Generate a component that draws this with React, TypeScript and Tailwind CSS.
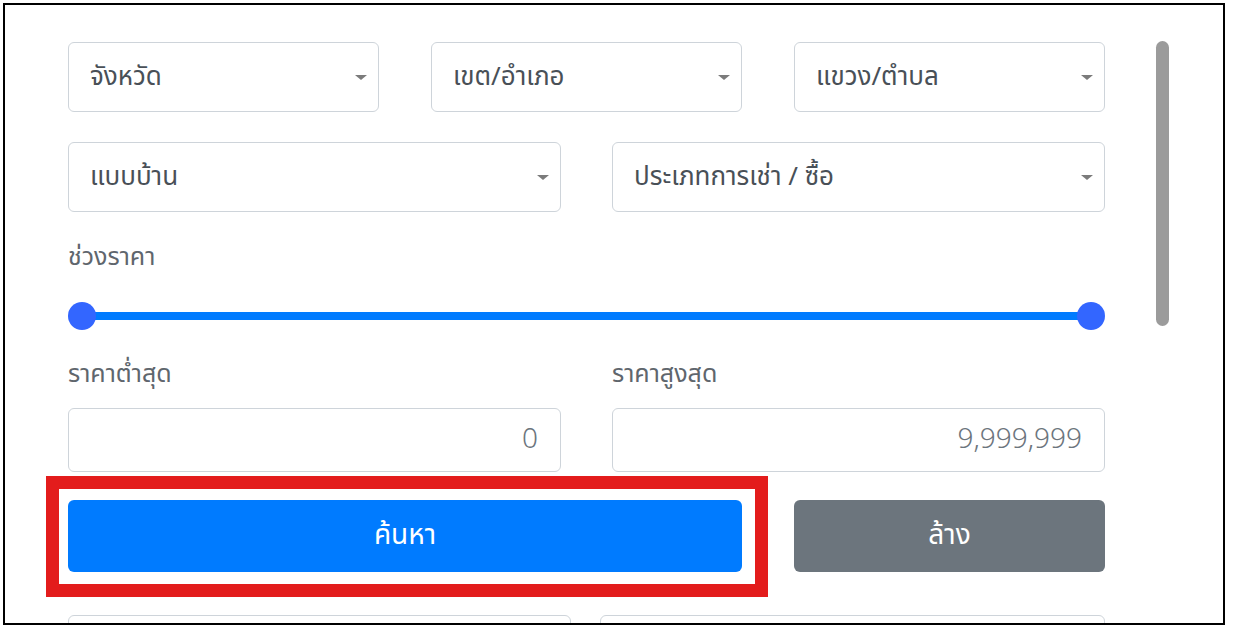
import React from "react";

const font = {
  fontFamily:
    '"Noto Sans Thai", "Noto Sans Thai UI", "Leelawadee UI", Tahoma, "Noto Sans", "DejaVu Sans", sans-serif',
};

function Select({ label }: { label: string }) {
  return (
    <div className="h-[70px] rounded-[6px] border border-[#ced4da] bg-white flex items-center justify-between pl-[21px] pr-[11px]">
      <span className="text-[26px] text-[#495057] leading-none">{label}</span>
      <span className="w-0 h-0 border-l-[6px] border-r-[6px] border-t-[5px] border-l-transparent border-r-transparent border-t-[#7b7b7b]" />
    </div>
  );
}

function NumInput({ value }: { value: string }) {
  return (
    <div className="h-[64px] rounded-[6px] border border-[#ced4da] bg-white flex items-center justify-end pr-[22px]">
      <span className="text-[28px] font-light text-[#6c757d] leading-none">{value}</span>
    </div>
  );
}

export default function App() {
  return (
    <div className="relative w-[1233px] h-[631px] bg-white overflow-hidden" style={font}>
      <div className="ml-[3px] mt-[3px] w-[1222px] h-[622px] border-2 border-black overflow-hidden">
        <div className="pl-[63px] pt-[37px] w-[1100px]">
          <div className="grid grid-cols-3 gap-x-[52px]">
            <Select label="จังหวัด" />
            <Select label="เขต/อำเภอ" />
            <Select label="แขวง/ตำบล" />
          </div>
          <div className="mt-[30px] grid grid-cols-2 gap-x-[51px]">
            <Select label="แบบบ้าน" />
            <Select label="ประเภทการเช่า / ซื้อ" />
          </div>
          <div className="mt-[30px] h-[32px] flex items-center text-[25px] text-[#5f666d]">ช่วงราคา</div>
          <div className="mt-[28px] h-[28px] relative flex items-center">
            <div className="mx-[13px] flex-1 h-[8px] rounded-full bg-[#007bff]" />
            <div className="absolute left-0 top-0 w-[28px] h-[28px] rounded-full bg-[#3366ff]" />
            <div className="absolute right-0 top-0 w-[28px] h-[28px] rounded-full bg-[#3366ff]" />
          </div>
          <div className="mt-[29px] grid grid-cols-2 gap-x-[51px]">
            <div className="h-[32px] flex items-center text-[25px] text-[#5f666d]">ราคาต่ำสุด</div>
            <div className="h-[32px] flex items-center text-[25px] text-[#5f666d]">ราคาสูงสุด</div>
          </div>
          <div className="mt-[17px] grid grid-cols-2 gap-x-[51px]">
            <NumInput value="0" />
            <NumInput value="9,999,999" />
          </div>
          <div className="mt-[28px] grid grid-cols-3 gap-x-[52px]">
            <div className="col-span-2 h-[72px] rounded-[6px] bg-[#007bff] flex items-center justify-center text-white text-[28px]">
              ค้นหา
            </div>
            <div className="h-[72px] rounded-[6px] bg-[#6c757d] flex items-center justify-center text-white text-[28px]">
              ล้าง
            </div>
          </div>
          <div className="mt-[43px] grid grid-cols-[503px_505px] gap-x-[29px]">
            <div className="h-[70px] rounded-[6px] border border-[#ced4da]" />
            <div className="h-[70px] rounded-[6px] border border-[#ced4da]" />
          </div>
        </div>
      </div>
      <div className="absolute left-[1156px] top-[41px] w-[13px] h-[285px] rounded-full bg-[#9b9b9b]" />
      <div className="absolute left-[46px] top-[476px] w-[722px] h-[121px] border-[13px] border-[#e31c1c]" />
    </div>
  );
}
